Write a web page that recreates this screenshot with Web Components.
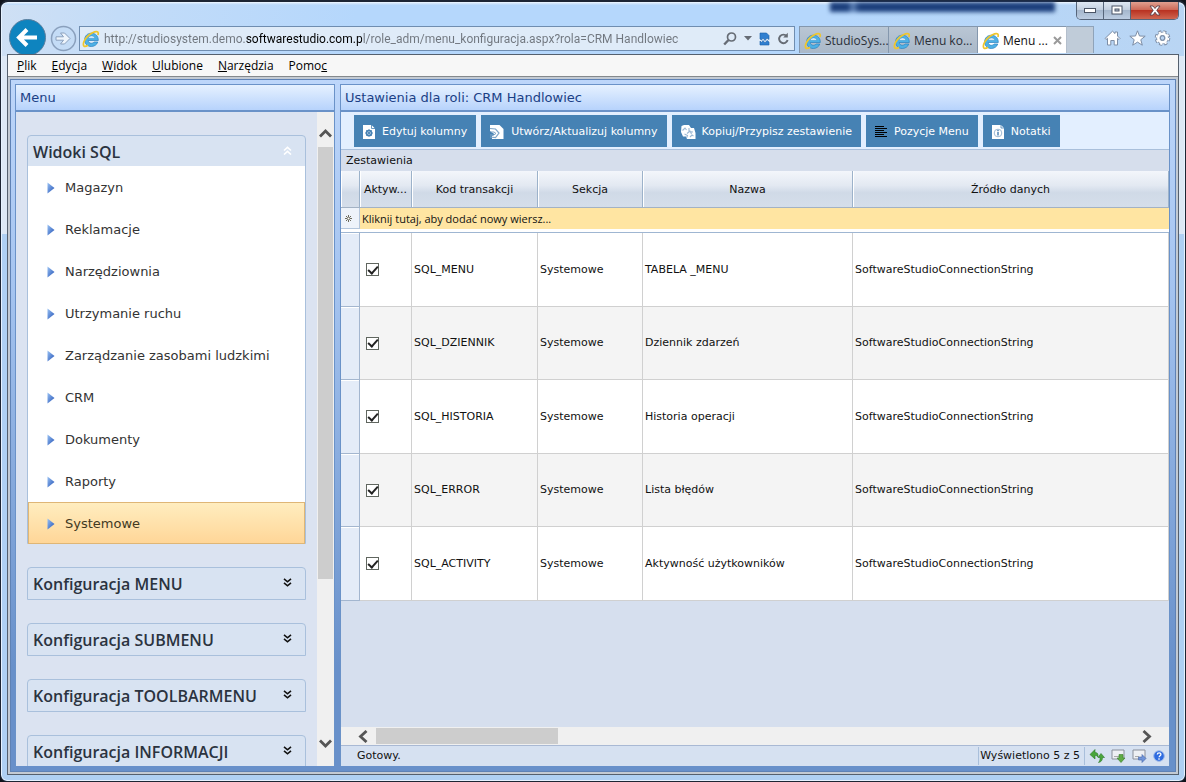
<!DOCTYPE html>
<html lang="pl">
<head>
<meta charset="utf-8">
<title>Menu konfiguracja</title>
<style>
  html, body {
    margin: 0;
    height: 100%;
  }

  body {
    --verdana: 'DejaVu Sans', Verdana, sans-serif;
    --segoe: 'Open Sans', 'Segoe UI', sans-serif;
    --line: #6a92c8;
    --panel: #dbe3f1;
    background: #10131c;
    font: 11px/16px var(--verdana);
    color: #111;
    overflow: hidden;
  }
</style>
</head>
<body>
<browser-window>
  <window-buttons slot="caption"></window-buttons>
  <nav-bar slot="nav">
    <browser-tab label="StudioSys..."></browser-tab>
    <browser-tab label="Menu ko..."></browser-tab>
    <browser-tab label="Menu ..." active></browser-tab>
  </nav-bar>
  <menu-bar slot="menu"></menu-bar>

  <pane-box heading="Menu" class="side">
    <scroll-area>
      <nav-group heading="Widoki SQL" open>
        <nav-link>Magazyn</nav-link>
        <nav-link>Reklamacje</nav-link>
        <nav-link>Narzędziownia</nav-link>
        <nav-link>Utrzymanie ruchu</nav-link>
        <nav-link>Zarządzanie zasobami ludzkimi</nav-link>
        <nav-link>CRM</nav-link>
        <nav-link>Dokumenty</nav-link>
        <nav-link>Raporty</nav-link>
        <nav-link selected>Systemowe</nav-link>
      </nav-group>
      <nav-group heading="Konfiguracja MENU"></nav-group>
      <nav-group heading="Konfiguracja SUBMENU"></nav-group>
      <nav-group heading="Konfiguracja TOOLBARMENU"></nav-group>
      <nav-group heading="Konfiguracja INFORMACJI"></nav-group>
    </scroll-area>
  </pane-box>

  <pane-box heading="Ustawienia dla roli: CRM Handlowiec" class="main">
    <tool-bar>
      <tool-button icon="docGear">Edytuj kolumny</tool-button>
      <tool-button icon="docRefresh">Utwórz/Aktualizuj kolumny</tool-button>
      <tool-button icon="docCopy">Kopiuj/Przypisz zestawienie</tool-button>
      <tool-button icon="lines">Pozycje Menu</tool-button>
      <tool-button icon="docInfo">Notatki</tool-button>
    </tool-bar>
    <data-grid caption="Zestawienia"></data-grid>
    <status-bar></status-bar>
  </pane-box>
</browser-window>

<script>
const ICONS = {
  ie: [18, 18, `
    <path d="M16.300 10.500H6.200c.2 1.700 1.500 2.800 3.200 2.800 1.300 0 2.200-.5 2.800-1.300h3.600c-1 2.800-3.400 4.500-6.500 4.500-4 0-6.700-2.800-6.700-6.600 0-3.900 2.800-6.700 6.800-6.700 4.200 0 7 2.900 6.900 7.300z" fill="#4db1e6" stroke="#2a7fbe" stroke-width=".7"/>
    <path d="M6.200 8.200h6.600C12.500 6.800 11.300 5.900 9.600 5.900 7.900 5.900 6.700 6.800 6.200 8.200z" fill="#eaf5fc" stroke="#2a7fbe" stroke-width=".4"/>
    <path d="M15.900 5c.6-1.600.4-2.900-.7-3.200C13 1.200 8.400 3.100 5 6.900 1.700 10.500.6 14.800 2 16.100c.8.700 2.400.2 4-.8" fill="none" stroke="#efc62c" stroke-width="1.700"/>`],
  search: [14, 14, `<circle cx="8.500" cy="5" r="4" fill="none" stroke="#666c75" stroke-width="1.700"/><path d="M5.500 8 1.200 12.500" stroke="#666c75" stroke-width="2.400"/>`],
  drop: [8, 5, `<path d="M0 0h8L4 4.500z" fill="#666c75"/>`],
  compat: [11, 14, `<path d="M1 1h6.500L10 3.500v4L8 6 6 8.500 4 6 2.500 8 1 7z" fill="#2f7fd0" stroke="#1a5ea8" stroke-width=".6"/><path d="m1 9 1.500 1.500L4 8.500 6 11l2-2.500 2 1.500v3H1z" fill="#2f7fd0" stroke="#1a5ea8" stroke-width=".6"/>`],
  reload: [12, 13, `<path d="M9.800 4.200A4.300 4.300 0 1 0 10.600 8" fill="none" stroke="#666c75" stroke-width="1.900"/><path d="M10.800.8v4.700H6.200z" fill="#666c75"/>`],
  home: [17, 16, `<path d="M1 8.500 8.500 1.200l2.500 2.400V2h2.500v4L16 8.500l-1 1-1.500-1.200V15h-3.300v-4.500H6.800V15H3.500V8.300L2 9.500z" fill="#fff" stroke="#7d8ea6"/>`],
  star: [17, 16, `<path d="m8.500.8 2 5.200 5.700.2-4.400 3.500 1.500 5.500-4.800-3.100-4.800 3.100 1.500-5.500L.8 6.200 6.500 6z" fill="#fff" stroke="#7d8ea6"/>`],
  gear: [17, 16, `<circle cx="8.500" cy="8" r="6.300" fill="none" stroke="#7d8ea6" stroke-width="3" stroke-dasharray="3 1.950"/><circle cx="8.500" cy="8" r="4.300" fill="none" stroke="#7d8ea6" stroke-width="4"/><circle cx="8.500" cy="8" r="6" fill="none" stroke="#fff" stroke-width="1.600" stroke-dasharray="2.200 2.510"/><circle cx="8.500" cy="8" r="4.200" fill="none" stroke="#fff" stroke-width="2.600"/><circle cx="8.500" cy="8" r="2.200" fill="#b8d3f2" stroke="#7d8ea6"/>`],
  cross: [9, 9, `<path d="m1 1 7 7M8 1 1 8" stroke="#9a9a9a" stroke-width="2"/>`],
  min: [13, 6, `<rect x=".5" y=".5" width="11" height="4" fill="#fff" stroke="#4b5566"/>`],
  max: [13, 11, `<rect x="1" y="1" width="10" height="8" fill="#fff" stroke="#4b5566"/><rect x="4" y="4" width="4" height="2" fill="#b9c4d3" stroke="#4b5566"/>`],
  close: [12, 11, `<path d="M1 1h3l2 2.500L8 1h3L7.800 5.300 11 10H8L6 7.200 4 10H1l3.200-4.700z" fill="#fff" stroke="#5c4148" stroke-width=".9"/>`],
  back: [37, 35, `<circle cx="18.500" cy="18.500" r="18" fill="#0e84bf" stroke="#5c7f9e"/><path d="M28 18.500H10.500M18 10.500l-8 8 8 8" fill="none" stroke="#fff" stroke-width="4"/>`],
  forward: [27, 27, `<circle cx="13.500" cy="13.500" r="12" fill="#c4dcf6" stroke="#8aa0bd" stroke-width="1.500"/><path d="M6 11.800h7.500L10.500 8h4l5.500 5.500-5.500 5.500h-4l3-3.800H6z" fill="#eef5fc" stroke="#8aa0bd"/>`],
  arrow: [8, 12, `<defs><linearGradient id="g" x1="0" y1="0" x2="1" y2="1"><stop offset="0" stop-color="#9cc4f5"/><stop offset="1" stop-color="#1f4fb5"/></linearGradient></defs><path d="M.5.5 7.500 6 .5 11.500z" fill="url(#g)"/>`],
  up2: [9, 9, `<path d="M1 4.500 4.500 1.300 8 4.500M1 8.500l3.500-3.200L8 8.500" fill="none" stroke="#fff" stroke-width="1.600"/>`],
  down2: [9, 9, `<path d="m1 .8 3.500 3L8 .8M1 4.800l3.500 3 3.500-3" fill="none" stroke="#111" stroke-width="1.600"/>`],
  sbUp: [13, 9, `<path d="M1 7.500 6.500 2 12 7.500" fill="none" stroke="#555" stroke-width="2.800"/>`],
  sbDown: [13, 9, `<path d="M1 1.500 6.500 7 12 1.500" fill="none" stroke="#555" stroke-width="2.800"/>`],
  sbLeft: [10, 13, `<path d="M8.500 1 2.500 6.500l6 5.500" fill="none" stroke="#555" stroke-width="2.800"/>`],
  sbRight: [10, 13, `<path d="m1.500 1 6 5.500-6 5.500" fill="none" stroke="#555" stroke-width="2.800"/>`],
  docGear: [14, 16, `<path d="M1 1h8.500L13 4.500V15H1z" fill="#fff"/><path d="M9.500 1v3.500H13" fill="none" stroke="#4682b4" stroke-width=".8"/><circle cx="7" cy="9" r="2.600" fill="none" stroke="#4682b4" stroke-width="1.500"/><path d="M7 5v8M3 9h8M4.200 6.200l5.600 5.600M9.800 6.200l-5.600 5.600" stroke="#4682b4" stroke-width=".8"/>`],
  docRefresh: [16, 16, `<path d="M1 1h9.500L14.500 5v10H3v-3l3-1.500L1 7z" fill="#fff"/><path d="M1 4.500 6.500 5l3.500 4-3.500 4.500L1 13" fill="none" stroke="#7fa6c8" stroke-width="1.200"/><path d="M2 8h3l2 1.500L4.500 11H1" fill="none" stroke="#7fa6c8"/>`],
  docCopy: [16, 16, `<path d="M1.500 2 4 1h5l2 3h3l1.500 5v6H7l-1-2.500H3L1 8z" fill="#fff"/><path d="M2.500 6.500 5 4l1.500 2M9 4v3.500l4 .5M7 9.500l3-2.500 1.500 3M4.500 10l3 1.500L6.500 14M10 13l2-2 1.500 1" fill="none" stroke="#9db9d4" stroke-width="1.100"/>`],
  lines: [14, 12, `<path d="M1 .5h9M1 2.500h12M1 4.500h9M1 6.500h12M1 8.500h9M1 10.500h12" stroke="#000" shape-rendering="crispEdges"/>`],
  docInfo: [14, 16, `<path d="M1 1h9l3 3v11H1z" fill="#fff"/><path d="M10 1v3h3" fill="none" stroke="#4682b4" stroke-width=".8"/><circle cx="7" cy="9" r="3.800" fill="none" stroke="#9db9d4"/><path d="M7 8v3.500M7 6v1.200" stroke="#6f9ac0" stroke-width="1.800"/>`],
  newRow: [9, 9, `<path d="M4.500 1v7M1 4.500h7M2 2l5 5M7 2 2 7" stroke="#6c6a5c"/><circle cx="4.500" cy="4.500" r="1.300" fill="#fff" stroke="#6c6a5c" stroke-width=".6"/>`],
  refresh: [16, 14, `<path d="m1 5.500 5-5v3c2 0 3 1 3 2.500v2c-1-1.500-2-1.500-3-1.500V10z" fill="#4aa63c" stroke="#2c7a28" stroke-width=".6"/><path d="m9 8.500 3-4 3.500 4h-2c0 3-1.500 4.500-4 5 1.300-1.500 1.800-3 1.500-5z" fill="#4aa63c" stroke="#2c7a28" stroke-width=".6"/>`],
  export: [15, 14, `<path d="M1 1h12v9H1z" fill="#eef0f4" stroke="#8a8f9a"/><path d="M3 7.500h5" stroke="#aaa"/><path d="M8 5.500h4V9h2l-4 4.500L6 9h2z" fill="#5faa45" stroke="#3a7f2c" stroke-width=".6"/>`],
  send: [15, 14, `<path d="M1 1h12v9H1z" fill="#eef0f4" stroke="#8a8f9a"/><path d="M3 7.500h4" stroke="#aaa"/><path d="M6.500 8H10V5.500L14 9.500l-4 4V11H6.500z" fill="#6f93d8" stroke="#4465a8" stroke-width=".6"/>`],
  help: [12, 12, `<circle cx="6" cy="6" r="5.300" fill="#2e6be0" stroke="#9db8e8"/><path d="M4.300 4.500C4.400 2.300 8 2.400 7.900 4.500 7.800 5.800 6.200 5.700 6.100 7.200M6 8.300v1.500" fill="none" stroke="#fff" stroke-width="1.300"/>`]
}

const icon = (name) => {
  const [w, h, body] = ICONS[name]
  return `<svg width="${w}" height="${h}" viewBox="0 0 ${w} ${h}" aria-hidden="true">${body}</svg>`
}

// Shared reset, each element adds its own rules after it
const BASE = `
  *, :host { box-sizing: border-box; }
  svg { display: block; flex: none; }
  button { margin: 0; padding: 0; border: 0; background: none; font: inherit; color: inherit; }
`

class BaseElement extends HTMLElement {
  constructor() {
    super()
    this.attachShadow({ mode: 'open' })
  }

  connectedCallback() {
    this.shadowRoot.innerHTML = `<style>${BASE}${this.styles()}</style>${this.markup()}`
  }

  styles() { return '' }
  markup() { return '<slot></slot>' }
}

class BrowserWindow extends BaseElement {
  styles() {
    return `
      :host {
        display: flex; flex-direction: column; height: 100vh;
        border: 1px solid #1d2533; border-top-width: 2px; border-radius: 8px 8px 7px 7px;
        padding: 0 6px 6px;
        background:
          linear-gradient(#e8f2fd, #b9d8fa) top / 100% 3px no-repeat,
          linear-gradient(100deg, #cfe0f4 0, #c3dcf8 10%, #b5d7fc 30%, #b5d7fc 70%, #b9d5f3 100%) top / 100% 54px no-repeat,
          linear-gradient(#dde8f5 0 232px, #afd0f3 232px);
        box-shadow: inset 0 0 0 1px #e6f2ff;
        position: relative;
      }
      /* title of a window lying behind, seen through the glass */
      .ghost {
        position: absolute; top: 0; left: 70%; width: 19%; height: 10px;
        background: linear-gradient(90deg, #1c3f7c 8%, #6487bb 10%, #1c3f7c 13%);
        filter: blur(2px);
      }
      .caption { display: flex; justify-content: flex-end; height: 24px; position: relative; }
      .view {
        flex: 1; min-height: 0; display: flex; flex-direction: column;
        border: 1px solid #55606e;
      }
      .page {
        flex: 1; min-height: 0; display: flex; gap: 5px; padding: 4px 5px 5px 4px;
        border: 1px solid #5f82b5; outline: 2px solid #c3cad3;
        margin: 2px;
        background: linear-gradient(#bdd6fa, #a5c4f0 30%, #6890ca 85%);
      }
      ::slotted(.side) { flex: 0 0 320px; }
      ::slotted(.main) { flex: 1; min-width: 0; }
    `
  }

  markup() {
    return `
      <div class="ghost"></div>
      <div class="caption"><slot name="caption"></slot></div>
      <slot name="nav"></slot>
      <div class="view">
        <slot name="menu"></slot>
        <div class="page"><slot></slot></div>
      </div>
    `
  }
}

class WindowButtons extends BaseElement {
  styles() {
    return `
      :host {
        display: flex; height: 18px; width: 103px;
        border: 1px solid #56657a; border-top: 0; border-radius: 0 0 5px 5px; overflow: hidden;
      }
      button {
        flex: 1; display: grid; place-items: center;
        background: linear-gradient(#dfe8f3, #c2cfdf 45%, #a5b7cd 50%, #bccde2);
        border-right: 1px solid #56657a;
      }
      .close { flex: 0 0 47px; border: 0; background: linear-gradient(#e0a090, #cd6a58 45%, #b93322 50%, #cf6650); }
    `
  }

  markup() {
    return `
      <button aria-label="Minimalizuj">${icon('min')}</button>
      <button aria-label="Maksymalizuj">${icon('max')}</button>
      <button class="close" aria-label="Zamknij">${icon('close')}</button>
    `
  }
}

class NavBar extends BaseElement {
  styles() {
    return `
      :host { display: flex; align-items: flex-start; height: 28px; font: 12px/20px var(--segoe); position: relative; }
      .back { align-self: flex-end; margin: 0 4px 0 2px; }
      .forward { align-self: flex-end; margin: 0 2px 2px 0; }
      .address {
        flex: 1; min-width: 0; height: 25px; display: flex; align-items: center; gap: 7px;
        padding: 0 5px 0 2px; border: 1px solid #6f8db0; background: #dfebf8;
      }
      input {
        flex: 1; min-width: 0; height: 22px; margin-left: -3px; padding: 0; border: 0; outline: 0;
        font: 12px/22px Roboto, var(--segoe); color: #70767e;
        -webkit-text-fill-color: transparent;
        background: linear-gradient(90deg, #70767e 141px, #000 141px 258px, #70767e 258px);
        -webkit-background-clip: text; background-clip: text;
      }
      .tabs { display: flex; margin-left: 4px; border-left: 1px solid #8497ad; }
      .new { width: 27px; height: 27px; background: #c0ccd9; border: 1px solid #8fa3b9; border-width: 1px 1px 0 0; }
      .tools { display: flex; gap: 8px; padding: 4px 8px 0 10px; }
    `
  }

  markup() {
    return `
      <button class="back" aria-label="Wstecz">${icon('back')}</button>
      <button class="forward" aria-label="Dalej">${icon('forward')}</button>
      <div class="address">
        ${icon('ie')}
        <input aria-label="Adres" value="http://studiosystem.demo.softwarestudio.com.pl/role_adm/menu_konfiguracja.aspx?rola=CRM Handlowiec">
        <button aria-label="Szukaj">${icon('search')}</button>
        <button aria-label="Historia">${icon('drop')}</button>
        <button aria-label="Widok zgodności">${icon('compat')}</button>
        <button aria-label="Odśwież">${icon('reload')}</button>
      </div>
      <div class="tabs"><slot></slot><button class="new" aria-label="Nowa karta"></button></div>
      <div class="tools">
        <button aria-label="Strona główna">${icon('home')}</button>
        <button aria-label="Ulubione">${icon('star')}</button>
        <button aria-label="Narzędzia">${icon('gear')}</button>
      </div>
    `
  }
}

class BrowserTab extends BaseElement {
  styles() {
    return `
      :host { display: block; }
      .tab {
        display: flex; align-items: center; gap: 3px; width: 89px; height: 27px; padding: 1px 4px 0;
        border: 1px solid #8497ad; border-width: 1px 1px 0 0;
        background: linear-gradient(#b9c6d4, #aab8c8); color: #2a2f38; white-space: nowrap;
      }
      :host([active]) .tab { background: #fff; color: #111; border-right-color: #b4bfcc; }
      .x { margin-left: auto; }
    `
  }

  markup() {
    const cross = this.hasAttribute('active') ? `<span class="x">${icon('cross')}</span>` : ''
    return `<button class="tab">${icon('ie')}<span>${this.getAttribute('label')}</span>${cross}</button>`
  }
}

class MenuBar extends BaseElement {
  styles() {
    return `
      :host {
        display: flex; gap: 15px; padding: 0 9px; background: #f7f7f7;
        border-bottom: 1px solid #84888c; font: 12px/21px var(--segoe); color: #000;
      }
    `
  }

  markup() {
    return ['<u>P</u>lik', '<u>E</u>dycja', '<u>W</u>idok', '<u>U</u>lubione', '<u>N</u>arzędzia', 'Pomo<u>c</u>']
      .map((t) => `<button>${t}</button>`)
      .join('')
  }
}

class PaneBox extends BaseElement {
  styles() {
    return `
      :host { display: flex; flex-direction: column; min-height: 0; border: 1px solid var(--line); border-bottom: 0; background: var(--panel); }
      h2 {
        margin: 0; padding: 0 4px; font: 13px/25px var(--verdana); color: #1b3f85;
        border-bottom: 2px solid var(--line);
        background: linear-gradient(#e6f1ff, #b7d3fc);
      }
      .body { flex: 1; min-height: 0; display: flex; flex-direction: column; }
    `
  }

  markup() {
    return `<h2>${this.getAttribute('heading')}</h2><div class="body"><slot></slot></div>`
  }
}

class ScrollArea extends BaseElement {
  styles() {
    return `
      :host { flex: 1; min-height: 0; display: flex; }
      .content {
        flex: 1; display: flex; flex-direction: column; gap: 23px;
        padding: 23px 11px 0; overflow: hidden;
      }
      .bar {
        width: 17px; background: #f0f0f0; display: flex; flex-direction: column; align-items: center;
        padding: 17px 0 18px;
      }
      .track { flex: 1; align-self: stretch; margin: 9px 0 0 1px; }
      .thumb { width: 15px; height: 73%; background: #cdcdcd; }
    `
  }

  markup() {
    return `
      <div class="content"><slot></slot></div>
      <div class="bar">${icon('sbUp')}<div class="track"><div class="thumb"></div></div>${icon('sbDown')}</div>
    `
  }
}

class NavGroup extends BaseElement {
  styles() {
    return `
      :host { display: block; flex: none; border: 1px solid #a9c0dc; border-radius: 4px 4px 0 0; background: #d8e3f2; }
      button {
        display: flex; align-items: center; justify-content: space-between; width: 100%; height: 31px;
        padding: 3px 13px 2px 5px; font: 600 16px/26px var(--segoe); color: #2b3340; text-align: left;
      }
      svg { margin-top: -3px; }
      :host([open]) button { height: 30px; padding-top: 4px; }
      .items { background: #fff; }
      :host([open]) .items { margin-bottom: -1px; }
    `
  }

  markup() {
    const open = this.hasAttribute('open')
    return `
      <button aria-expanded="${open}">${this.getAttribute('heading')}${icon(open ? 'up2' : 'down2')}</button>
      <div class="items"><slot></slot></div>
    `
  }
}

class NavLink extends BaseElement {
  styles() {
    return `
      :host { display: block; }
      a {
        display: flex; align-items: center; gap: 10px; height: 42px; padding: 2px 19px 0;
        font: 13px/20px var(--verdana); color: #333; text-decoration: none; white-space: nowrap;
      }
      :host([selected]) a {
        padding: 2px 18px 0; border: 1px solid #dfb676;
        background: linear-gradient(#ffedbf, #ffd698); color: #42391f;
      }
    `
  }

  markup() {
    return `<a href="#">${icon('arrow')}<slot></slot></a>`
  }
}

class ToolBar extends BaseElement {
  styles() {
    return `
      :host { display: flex; gap: 5px; padding: 3px 13px 2px; background: #e3efff; border-bottom: 1px solid #a9bfdb; }
    `
  }
}

class ToolButton extends BaseElement {
  styles() {
    return `
      :host { display: block; }
      button {
        display: flex; align-items: center; gap: 6px; height: 32px; padding: 2px 9px 0 8px;
        background: #4682b4; color: #fff; white-space: nowrap;
      }
    `
  }

  markup() {
    return `<button>${icon(this.getAttribute('icon'))}<slot></slot></button>`
  }
}

class DataGrid extends BaseElement {
  static columns = ['Aktyw...', 'Kod transakcji', 'Sekcja', 'Nazwa', 'Źródło danych']

  static rows = [
    ['SQL_MENU', 'Systemowe', 'TABELA _MENU', 'SoftwareStudioConnectionString'],
    ['SQL_DZIENNIK', 'Systemowe', 'Dziennik zdarzeń', 'SoftwareStudioConnectionString'],
    ['SQL_HISTORIA', 'Systemowe', 'Historia operacji', 'SoftwareStudioConnectionString'],
    ['SQL_ERROR', 'Systemowe', 'Lista błędów', 'SoftwareStudioConnectionString'],
    ['SQL_ACTIVITY', 'Systemowe', 'Aktywność użytkowników', 'SoftwareStudioConnectionString']
  ]

  styles() {
    return `
      :host { flex: 1; min-height: 0; display: flex; flex-direction: column; background: #d6dfee; }
      table { width: 100%; table-layout: fixed; border-collapse: separate; border-spacing: 0; background: #fff; }
      caption { padding: 2px 5px; text-align: left; background: #d6deec; line-height: 17px; }
      th, td { padding: 0 2px; white-space: nowrap; overflow: hidden; text-align: left; }
      .head th {
        height: 37px; padding: 2px 2px 0; font-weight: normal; text-align: center;
        background: linear-gradient(#f3f6fb, #e3e9f2 40%, #d0dae7 60%, #d5deea);
        border-right: 1px solid #9cb2ca; border-bottom: 1px solid #a3b2c4;
        box-shadow: inset 1px 0 #fff;
      }
      .new td { height: 21px; background: #ffe5a2; font: 11px/20px var(--segoe); }
      .new th { background: #eef3fa; border: 1px solid #b4c6dc; border-width: 0 1px 1px 0; padding: 0 3px; }
      .gap td { height: 4px; padding: 0; border-bottom: 1px solid #9fb6d2; }
      .data td { height: 74px; border: 1px solid #d0d0d0; border-width: 0 1px 1px 0; }
      .data:nth-child(even) td { height: 73px; background: #f4f4f4; }
      .data th { background: #e4ecf8; border: 1px solid #a3b6cf; border-width: 0 1px 1px 0; box-shadow: inset 0 1px #fff; }
      .data td.check { padding: 0 6px; }
      input {
        appearance: none; display: grid; place-items: center; width: 13px; height: 13px; margin: 0;
        border: 1px solid #60665f; background: #fff;
      }
      input:checked::before {
        content: ''; width: 8px; height: 4px; margin-top: -2px;
        border: solid #222; border-width: 0 0 2px 2px; transform: rotate(-48deg);
      }
      .bar {
        margin-top: auto; height: 18px; display: flex; align-items: center; background: #f0f0f0; padding: 0 17px;
      }
      .track { flex: 1; margin: 0 8px; }
      .thumb { width: 24%; height: 16px; background: #cdcdcd; }
    `
  }

  markup() {
    const head = DataGrid.columns.map((c) => `<th scope="col">${c}</th>`).join('')
    const rows = DataGrid.rows.map((row) => `
      <tr class="data">
        <th></th>
        <td class="check"><input type="checkbox" checked aria-label="Aktywny ${row[0]}"></td>
        ${row.map((cell) => `<td>${cell}</td>`).join('')}
      </tr>`).join('')

    return `
      <table>
        <caption>${this.getAttribute('caption')}</caption>
        <colgroup>
          <col style="width: 19px"><col style="width: 52px"><col style="width: 126px">
          <col style="width: 105px"><col style="width: 210px"><col>
        </colgroup>
        <thead>
          <tr class="head"><th></th>${head}</tr>
          <tr class="new"><th>${icon('newRow')}</th><td colspan="5">Kliknij tutaj, aby dodać nowy wiersz...</td></tr>
          <tr class="gap"><td colspan="6"></td></tr>
        </thead>
        <tbody>${rows}</tbody>
      </table>
      <div class="bar">${icon('sbLeft')}<div class="track"><div class="thumb"></div></div>${icon('sbRight')}</div>
    `
  }
}

class StatusBar extends BaseElement {
  styles() {
    return `
      :host {
        display: flex; align-items: center; height: 21px; padding: 0 4px 0 16px;
        background: #d6e1f1; border-top: 1px solid #a9b9d4;
      }
      .count { margin-left: auto; padding: 0 4px 0 1px; border: 1px solid #a9bfdb; border-width: 0 1px; line-height: 18px; }
      .icons { display: flex; align-items: center; gap: 6px; padding-left: 4px; }
    `
  }

  markup() {
    return `
      <span>Gotowy.</span>
      <span class="count">Wyświetlono 5 z 5</span>
      <div class="icons">
        <button aria-label="Odśwież">${icon('refresh')}</button>
        <button aria-label="Eksportuj">${icon('export')}</button>
        <button aria-label="Wyślij">${icon('send')}</button>
        <button aria-label="Pomoc">${icon('help')}</button>
      </div>
    `
  }
}

customElements.define('browser-window', BrowserWindow)
customElements.define('window-buttons', WindowButtons)
customElements.define('nav-bar', NavBar)
customElements.define('browser-tab', BrowserTab)
customElements.define('menu-bar', MenuBar)
customElements.define('pane-box', PaneBox)
customElements.define('scroll-area', ScrollArea)
customElements.define('nav-group', NavGroup)
customElements.define('nav-link', NavLink)
customElements.define('tool-bar', ToolBar)
customElements.define('tool-button', ToolButton)
customElements.define('data-grid', DataGrid)
customElements.define('status-bar', StatusBar)
</script>
</body>
</html>
